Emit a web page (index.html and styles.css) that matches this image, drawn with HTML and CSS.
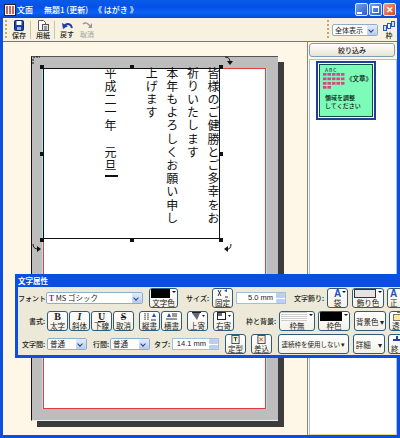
FILE: index.html
```html
<!DOCTYPE html>
<html lang="ja">
<head>
    <meta charset="UTF-8">
    <title>文面</title>
    <link rel="stylesheet" href="styles.css">
</head>
<body>
    <div class="window">
        <div class="titlebar">
            <svg class="app-icon" width="12" height="12" viewBox="0 0 12 12"><rect x="0.5" y="0.5" width="11" height="11" fill="#fff" stroke="#223"/><path d="M3 2v8M6 2v8M9 2v8" stroke="#b33" stroke-width="1.5"/></svg>
            <span class="title-name">文面</span>
            <span class="title-doc">無題1 (更新)</span>
            <span class="title-kind">《 はがき 》</span>
            <div class="win-buttons">
                <div class="win-btn"><span class="win-min"></span></div>
                <div class="win-btn"><span class="win-max"></span></div>
                <div class="win-btn win-close">✕</div>
            </div>
        </div>

        <div class="toolbar">
            <div class="grip"></div>
            <div class="tool">
                <svg width="10" height="11" viewBox="0 0 10 11"><rect x="0.5" y="0.5" width="9" height="10" rx="1" fill="#1c3fa8" stroke="#10246a"/><rect x="2.500" y="1" width="5" height="4" fill="#fff"/><rect x="3" y="7" width="4" height="3" fill="#9fb4e8"/></svg>
                <span>保存</span>
            </div>
            <div class="tool-sep"></div>
            <div class="tool">
                <svg width="13" height="11" viewBox="0 0 13 11"><path d="M1.500 0.500h5l2 2v8h-7z" fill="#fff" stroke="#556"/><rect x="5.500" y="4.500" width="6" height="6" fill="#f3e6b0" stroke="#556"/><path d="M7 7h3M7 9h3" stroke="#2a56c0"/></svg>
                <span>用紙</span>
            </div>
            <div class="tool-sep"></div>
            <div class="tool">
                <svg width="11" height="9" viewBox="0 0 11 9"><path d="M10 7C9 3 6 2 3 4" fill="none" stroke="#1c3fa8" stroke-width="2"/><path d="M0 2l1 6 5-3z" fill="#1c3fa8"/></svg>
                <span>戻す</span>
            </div>
            <div class="tool tool-off">
                <svg width="11" height="9" viewBox="0 0 11 9"><path d="M1 3C3 1 6 2 8 5" fill="none" stroke="#999" stroke-width="1.500"/><path d="M10 2v5H6z" fill="#999"/></svg>
                <span>取消</span>
            </div>
            <div class="tool-right">
                <div class="grip"></div>
                <div class="select zoom-select"><span>全体表示</span><div class="drop"></div></div>
                <div class="tool">
                    <svg width="13" height="10" viewBox="0 0 13 10"><rect x="0.500" y="4.500" width="3" height="5" fill="#cde" stroke="#2a56c0"/><rect x="4.500" y="2.500" width="3" height="5" fill="#fff" stroke="#2a56c0"/><rect x="8.500" y="0.500" width="3" height="5" fill="#cde" stroke="#2a56c0"/></svg>
                    <span>枠</span>
                </div>
            </div>
        </div>

        <div class="main">
            <div class="canvas">
                <div class="paper">
                    <div class="page">
                        <div class="textbox">
                            <p class="vtext">皆様のご健勝とご多幸をお<br>祈りいたします<br>本年もよろしくお願い申し<br>上げます<br><br>平成二一年　元旦</p>
                            <div class="caret"></div>
                            <i class="handle h-tl"></i><i class="handle h-tc"></i><i class="handle h-tr"></i>
                            <i class="handle h-ml"></i><i class="handle h-mr"></i>
                            <i class="handle h-bl"></i><i class="handle h-bc"></i><i class="handle h-br"></i>
                            <svg class="rot r-tl" width="9" height="9" viewBox="0 0 9 9"><path d="M1 8V3Q1 1 4 1h4" fill="none" stroke="#111" stroke-dasharray="2 1"/></svg>
                            <svg class="rot r-tr" width="9" height="9" viewBox="0 0 9 9"><path d="M1 1Q6 1 6 6" fill="none" stroke="#111"/><path d="M3 5h6L6 9z" fill="#111"/></svg>
                            <svg class="rot r-bl" width="9" height="9" viewBox="0 0 9 9"><path d="M1 1Q1 6 6 6" fill="none" stroke="#111"/><path d="M5 3v6l4-3z" fill="#111"/></svg>
                            <svg class="rot r-br" width="9" height="9" viewBox="0 0 9 9"><path d="M7 1Q7 7 2 6" fill="none" stroke="#111"/><path d="M4 3v6L0 6z" fill="#111"/></svg>
                        </div>
                    </div>
                </div>
            </div>
            <div class="side">
                <button class="filter-btn">絞り込み</button>
                <div class="thumb-list">
                    <div class="thumb">
                        <div class="thumb-inner">
                            <div class="thumb-top">
                                <div class="thumb-dots">
                                    <span class="abc">ABC</span>
                                    <div class="dots"></div>
                                    <div class="dots dots-short"></div>
                                </div>
                                <span class="thumb-title">《文章》</span>
                            </div>
                            <div class="thumb-note">領域を調整<br>してください</div>
                        </div>
                    </div>
                </div>
            </div>
        </div>
    </div>

    <div class="panel">
        <div class="panel-title">文字属性</div>
        <div class="panel-body">
            <div class="row">
                <label class="lbl lbl-font">フォント:</label>
                <div class="select font-select"><span><b class="tt">T</b> MS ゴシック</span><div class="drop"></div></div>
                <div class="btn btn-drop color-btn push-l"><div class="swatch"></div><span>文字色</span></div>
                <label class="lbl lbl-size">サイズ:</label>
                <div class="btn"><svg width="14" height="9" viewBox="0 0 14 9"><path d="M2 1l3 6M5 1L2 7" stroke="#333"/><path d="M8 2l3-2v3z" fill="#1f4fc0"/><path d="M9 8h3" stroke="#333"/></svg><span>固定</span></div>
                <div class="spin size-spin"><span>5.0 mm</span><div class="spin-btns"><i></i><i></i></div></div>
                <label class="lbl lbl-deco">文字飾り:</label>
                <div class="btn btn-drop"><em class="blue">A</em><span>袋</span></div>
                <div class="btn btn-drop btn-wide"><div class="swatch swatch-light"></div><span>飾り色</span></div>
                <div class="btn btn-edge"><em class="blue">A</em><span>正</span></div>
            </div>
            <div class="row">
                <label class="lbl lbl-style">書式:</label>
                <div class="btn"><em>B</em><span>太字</span></div>
                <div class="btn"><em class="it">I</em><span>斜体</span></div>
                <div class="btn"><em class="ul">U</em><span>下線</span></div>
                <div class="btn"><em class="st">S</em><span>取消</span></div>
                <div class="btn push-m"><svg width="13" height="9" viewBox="0 0 13 9"><path d="M2 1v7M5 1v7" stroke="#333" stroke-dasharray="1.500 0.500"/><path d="M9 5l2-4 2 4z" fill="#1f4fc0"/><path d="M8 8h5" stroke="#333"/></svg><span>縦書</span></div>
                <div class="btn"><svg width="13" height="9" viewBox="0 0 13 9"><path d="M2 5l2-4 2 4z" fill="#1f4fc0"/><path d="M7 2h5M7 4h5M1 7h11" stroke="#333"/></svg><span>横書</span></div>
                <div class="btn push-m"><svg width="14" height="9" viewBox="0 0 14 9"><path d="M1 1h8L6 8z" fill="#667"/><path d="M1 0.500h9" stroke="#222"/><path d="M11 3h3l-1.500 2z" fill="#222"/></svg><span>上寄</span></div>
                <div class="btn push-m"><svg width="14" height="9" viewBox="0 0 14 9"><rect x="0.500" y="0.500" width="8" height="7" fill="#fff" stroke="#222"/><rect x="1" y="1" width="4" height="3" fill="#667"/><path d="M11 3h3l-1.500 2z" fill="#222"/></svg><span>右寄</span></div>
                <label class="lbl lbl-frame">枠と背景:</label>
                <div class="btn btn-drop btn-frame"><div class="swatch swatch-none"></div><span>枠無</span></div>
                <div class="btn btn-drop btn-frame2"><div class="swatch"></div><span>枠色</span></div>
                <div class="btn btn-wide btn-line"><span>背景色 ▾</span></div>
                <div class="btn btn-edge"><svg width="13" height="9" viewBox="0 0 13 9"><rect x="1.500" y="2.500" width="9" height="6" fill="#fbe9a0" stroke="#776"/><path d="M5 0.500h4" stroke="#776"/></svg><span>透</span></div>
            </div>
            <div class="row">
                <label class="lbl lbl-char">文字間:</label>
                <div class="select gap-select"><span>普通</span><div class="drop"></div></div>
                <label class="lbl lbl-line">行間:</label>
                <div class="select gap-select"><span>普通</span><div class="drop"></div></div>
                <label class="lbl lbl-tab">タブ:</label>
                <div class="spin tab-spin"><span>14.1 mm</span><div class="spin-btns"><i></i><i></i></div></div>
                <div class="btn push-l"><svg width="11" height="10" viewBox="0 0 11 10"><rect x="1.500" y="0.500" width="8" height="9" fill="#fff6c8" stroke="#1c3fa8"/><path d="M3.500 3h4M5.500 3v4" stroke="#223"/></svg><span>定型</span></div>
                <div class="btn push-m"><svg width="11" height="10" viewBox="0 0 11 10"><rect x="1.500" y="0.500" width="8" height="9" fill="#fff6c8" stroke="#1c3fa8"/><path d="M3 3l4 4M7 3L3 7" stroke="#b33"/></svg><span>差込</span></div>
                <div class="btn btn-long btn-line"><span>連続枠を使用しない ▾</span></div>
                <div class="btn btn-wide btn-line"><span>詳細　▾</span></div>
                <div class="btn btn-edge"><svg width="12" height="9" viewBox="0 0 12 9"><path d="M2 5h8M6 1v4" stroke="#1f3fb0" stroke-width="2"/></svg><span>終</span></div>
            </div>
        </div>
    </div>
</body>
</html>
```

FILE: styles.css
```css
* {
    box-sizing: border-box;
    margin: 0;
    padding: 0;
}

body {
    width: 400px;
    height: 438px;
    overflow: hidden;
    position: relative;
    font-family: "Noto Sans CJK JP", "Liberation Sans", sans-serif;
    font-size: 8px;
    color: #222;
}

.window {
    width: 400px;
    height: 438px;
    display: flex;
    flex-direction: column;
    background: #0a4fe0;
    padding: 0 3px 3px;
}

/* title bar */
.titlebar {
    height: 18px;
    margin: 0 -3px;
    padding: 1px 4px 0;
    display: flex;
    align-items: center;
    color: #fff;
    font-size: 8px;
    font-weight: 500;
    white-space: nowrap;
    background: linear-gradient(to bottom, #0a5be8, #0550e8 40%, #0a62f5 70%, #0548d0);
}

.app-icon {
    flex: none;
}

.title-name {
    margin-left: 1px;
}

.title-doc {
    margin-left: 11px;
}

.title-kind {
    margin-left: 6px;
}

.win-buttons {
    margin-left: auto;
    display: flex;
    gap: 1px;
}

.win-btn {
    width: 13px;
    height: 13px;
    border: 1px solid #dfe8fb;
    border-radius: 2px;
    background: linear-gradient(135deg, #7aa0ee, #2a58d8);
    display: flex;
    align-items: center;
    justify-content: center;
}

.win-min {
    width: 5px;
    height: 2px;
    background: #fff;
    margin: 6px 4px 0 0;
}

.win-max {
    width: 7px;
    height: 7px;
    border: 1px solid #fff;
    border-top-width: 2px;
}

.win-close {
    background: linear-gradient(135deg, #f0a080, #d8401c);
    color: #fff;
    font-size: 9px;
    font-weight: bold;
    line-height: 1;
}

/* toolbar */
.toolbar {
    height: 24px;
    background: #f7f2e0;
    border-bottom: 1px solid #777;
    display: flex;
    align-items: center;
    padding-left: 2px;
    flex: none;
}

.grip {
    width: 2px;
    height: 20px;
    background: repeating-linear-gradient(to bottom, #c9a56b 0, #c9a56b 2px, transparent 2px, transparent 4px);
    flex: none;
}

.tool {
    width: 16px;
    margin-left: 4px;
    display: flex;
    flex-direction: column;
    align-items: center;
    font-size: 7px;
    font-weight: 500;
    line-height: 8px;
    white-space: nowrap;
    flex: none;
}

.tool-off {
    color: #aaa;
}

.tool-sep {
    width: 1px;
    height: 18px;
    background: #c8c4b0;
    margin-left: 3px;
    flex: none;
}

.tool-right {
    margin-left: auto;
    display: flex;
    align-items: center;
    padding-right: 1px;
}

.tool-right .tool {
    width: 14px;
    margin-left: 4px;
}

/* form bits */
.select {
    height: 12px;
    background: #fff;
    border: 1px solid #8fafc8;
    border-radius: 2px;
    display: flex;
    align-items: center;
    padding-left: 2px;
    font-size: 7.500px;
    line-height: 10px;
    white-space: nowrap;
    flex: none;
}

.select span {
    flex: 1;
}

.drop {
    width: 10px;
    height: 10px;
    background: linear-gradient(#e4ecfb, #b8cbf0);
    position: relative;
    border-radius: 1px;
    flex: none;
}

.drop::after {
    content: '';
    position: absolute;
    left: 2px;
    top: 3px;
    width: 3px;
    height: 3px;
    border: solid #28427a;
    border-width: 0 1.500px 1.500px 0;
    transform: rotate(45deg);
}

.zoom-select {
    width: 46px;
    margin-left: 3px;
    font-size: 7px;
}

/* main area */
.main {
    flex: 1;
    display: flex;
    min-height: 0;
}

.canvas {
    flex: 1;
    background: #fef7e8;
    padding: 14px 0 0 28px;
}

.paper {
    width: 247px;
    height: 365px;
    background: #bdbdbd;
    border-left: 1px solid #111;
    border-top: 1px solid #555;
    border-bottom: 1px solid #eee;
    box-shadow: 6px 6px 0 #3c3c3c;
    padding: 11px 12px 11px 11px;
}

.page {
    height: 100%;
    position: relative;
    background: #fff;
    border: 1px solid #e23c3c;
    box-shadow: 1px 0 0 #9fe8ee, -1px 0 0 #9fe8ee;
}

.textbox {
    position: absolute;
    left: -1px;
    top: -1px;
    width: 177px;
    height: 171px;
    border: 1px solid #111;
    background: #fff;
}

.vtext {
    writing-mode: vertical-rl;
    height: 170px;
    margin: -2px -4px 0 0;
    font-size: 12px;
    line-height: 20.600px;
    letter-spacing: 1.200px;
    white-space: nowrap;
    color: #111;
    float: right;
}

.caret {
    position: absolute;
    left: 61px;
    top: 106px;
    width: 13px;
    height: 2px;
    background: #111;
}

.handle {
    position: absolute;
    width: 4px;
    height: 4px;
    background: #111;
}

.h-tl, .h-tc, .h-tr { top: -4px; }
.h-ml, .h-mr { top: 83px; }
.h-bl, .h-bc, .h-br { bottom: -4px; }
.h-tl, .h-ml, .h-bl { left: -4px; }
.h-tc, .h-bc { left: 86px; }
.h-tr, .h-mr, .h-br { right: -4px; }

.rot {
    position: absolute;
}

.r-tl { left: -12px; top: -13px; }
.r-tr { right: -14px; top: -13px; }
.r-bl { left: -12px; bottom: -14px; }
.r-br { right: -14px; bottom: -14px; }

/* right side list */
.side {
    width: 90px;
    background: #fef7e8;
    border-left: 1px solid #8a8670;
    padding: 1px 0 0 1px;
    display: flex;
    flex-direction: column;
    flex: none;
}

.filter-btn {
    width: 86px;
    height: 14px;
    margin-bottom: 2px;
    background: linear-gradient(#fff, #e8e4d4);
    border: 1px solid #7f9db9;
    border-radius: 3px;
    font-family: inherit;
    font-size: 7px;
    font-weight: 500;
    line-height: 11px;
    color: #222;
}

.thumb-list {
    flex: 1;
    background: #fff;
    border: 1px solid #a8c0dc;
    border-bottom-color: #e6d58f;
    padding: 1px 0 0 6px;
}

.thumb {
    width: 60px;
    height: 59px;
    border: 2px solid #1f3f9f;
    padding: 1px;
}

.thumb-inner {
    height: 100%;
    background: #7cfcb8;
    border: 1px solid #0e4a44;
    padding: 2px 1px 0 2px;
    color: #124;
    overflow: hidden;
}

.thumb-top {
    display: flex;
    align-items: center;
}

.abc {
    display: block;
    font-size: 5px;
    line-height: 5px;
    letter-spacing: 1px;
    margin-left: 3px;
    color: #225;
}

.dots {
    width: 23px;
    height: 13px;
    background:
        linear-gradient(to right, #7cfcb8 1px, transparent 1px) 0 0 / 4.500px 4.500px,
        linear-gradient(to bottom, #d8468a 3px, transparent 3px) 0 0 / 4.500px 4.500px;
    margin-top: 1px;
}

.dots-short {
    width: 9px;
    height: 3px;
    margin-top: 0;
}

.thumb-title {
    font-size: 6.500px;
    font-weight: 500;
    line-height: 10px;
    white-space: nowrap;
    margin-left: 1px;
    color: #111;
}

.thumb-note {
    margin: 5px 0 0 3px;
    font-size: 6px;
    font-weight: 500;
    line-height: 8px;
    white-space: nowrap;
    color: #111;
}

/* floating text properties panel */
.panel {
    position: absolute;
    left: 15px;
    top: 274px;
    width: 400px;
    height: 84px;
    background: #0a4fe0;
    padding: 0 0 3px 3px;
}

.panel-title {
    height: 13px;
    color: #fff;
    font-size: 7.500px;
    font-weight: 700;
    line-height: 13px;
}

.panel-body {
    height: 68px;
    background: #ece9d8;
    padding-top: 1px;
    display: flex;
    flex-direction: column;
    gap: 3px;
}

.row {
    height: 20px;
    display: flex;
    align-items: center;
    white-space: nowrap;
}

.lbl {
    text-align: right;
    font-size: 7px;
    font-weight: 500;
    line-height: 9px;
    flex: none;
}

.lbl-font { width: 28px; }
.lbl-size { width: 30px; margin-right: 3px; }
.lbl-deco { width: 38px; margin-right: 3px; }
.lbl-style { width: 27px; margin-right: 2px; }
.lbl-frame { width: 41px; margin-right: 3px; }
.lbl-char { width: 27px; margin-right: 2px; }
.lbl-line { width: 22px; margin-right: 1px; }
.lbl-tab { width: 20px; margin-right: 2px; }

.font-select {
    width: 97px;
}

.gap-select {
    width: 40px;
}

.btn {
    width: 21px;
    height: 20px;
    margin-right: 1px;
    background: linear-gradient(#fff, #f4f1e6);
    border: 1px solid #2f5a78;
    border-radius: 3px;
    display: flex;
    flex-direction: column;
    align-items: center;
    justify-content: flex-end;
    font-size: 7.500px;
    line-height: 9px;
    flex: none;
    overflow: hidden;
    position: relative;
}

/* little arrow in the top right corner of drop-down buttons */
.btn-drop::after {
    content: '';
    position: absolute;
    right: 1px;
    top: 2px;
    border: solid transparent;
    border-width: 2px 2px 0;
    border-top-color: #111;
}

.btn-edge {
    align-items: flex-start;
    padding-left: 2px;
}

.btn em {
    font-family: "Liberation Serif", serif;
    font-style: normal;
    font-weight: 700;
    font-size: 10px;
    line-height: 9px;
}

.btn em.it { font-style: italic; }
.btn em.ul { text-decoration: underline; }
.btn em.st { text-decoration: line-through; }
.btn em.blue { color: #1f4fc0; font-family: "Liberation Sans", sans-serif; }

.btn-wide {
    width: 32px;
    margin-left: 3px;
    margin-right: 3px;
}

.btn-line {
    justify-content: center;
}

.btn-long {
    width: 71px;
    margin-left: 5px;
    font-size: 6.500px;
}

.btn-frame {
    width: 36px;
    margin-right: 3px;
}

.btn-frame2 {
    width: 32px;
}

.color-btn {
    width: 29px;
}

.swatch {
    width: calc(100% - 8px);
    height: 9px;
    background: #000;
    align-self: flex-start;
    margin-left: 1px;
    flex: none;
}

.swatch-light {
    background: #e4e4e4;
    border: 1px solid #333;
}

.swatch-none {
    background: repeating-linear-gradient(to bottom, #ccc 0, #ccc 1px, #fff 1px, #fff 2px);
}

.push-l { margin-left: 6px; }
.push-m { margin-left: 4px; }

.tt {
    color: #8a2a8a;
    font-family: "Liberation Serif", serif;
}

.spin {
    height: 12px;
    background: #fff;
    border: 1px solid #a5bfd6;
    display: flex;
    align-items: center;
    justify-content: flex-end;
    font-size: 7.500px;
    line-height: 10px;
    font-family: "Liberation Sans", sans-serif;
    flex: none;
}

.spin span {
    padding-right: 3px;
}

.size-spin {
    width: 50px;
    margin-left: 2px;
}

.tab-spin {
    width: 47px;
}

.spin-btns {
    width: 9px;
    height: 10px;
    display: flex;
    flex-direction: column;
    gap: 1px;
    flex: none;
}

.spin-btns i {
    flex: 1;
    background: #bccff0;
    border-radius: 1px;
}
```
